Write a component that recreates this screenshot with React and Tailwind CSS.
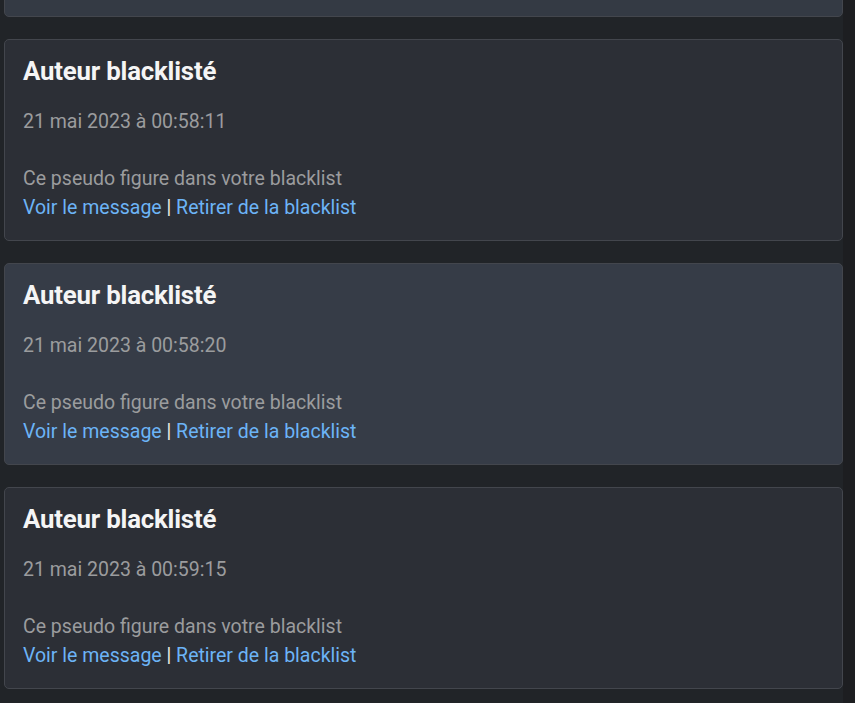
import React from "react";

function Card({ date, highlight }) {
  return (
    <div
      className={
        "h-[202px] shrink-0 rounded-[5px] border border-[#43464d] px-[18px] pt-[14px] " +
        (highlight ? "bg-[#363c47]" : "bg-[#2c2f36]")
      }
    >
      <h5 className="text-[25.8px] leading-[34px] font-bold text-[#f5f5f5] tracking-[-0.2px]">Auteur blacklisté</h5>
      <p className="mt-[19px] text-[19.5px] leading-[29px] text-[#9b9c9e]">{date}</p>
      <p className="mt-[28px] text-[19.5px] leading-[29px] text-[#9b9c9e]">Ce pseudo figure dans votre blacklist</p>
      <p className="text-[19.5px] leading-[29px] text-[#f1f0e6]">
        <a className="text-[#6cb4f7]">Voir le message</a> | <a className="text-[#6cb4f7]">Retirer de la blacklist</a>
      </p>
    </div>
  );
}

export default function App() {
  return (
    <div className="flex h-[703px] w-[855px] overflow-hidden bg-[#212428] font-['Roboto',sans-serif]">
      <div className="flex w-[843px] shrink-0 flex-col gap-[22px] pl-[4px] -mt-[22px]">
        <div className="h-[39px] shrink-0 rounded-[5px] border border-[#43464d] bg-[#343a44]" />
        <Card date="21 mai 2023 à 00:58:11" />
        <Card date="21 mai 2023 à 00:58:20" highlight />
        <Card date="21 mai 2023 à 00:59:15" />
      </div>
      <div className="w-[12px] bg-[#1d1e21]" />
    </div>
  );
}
